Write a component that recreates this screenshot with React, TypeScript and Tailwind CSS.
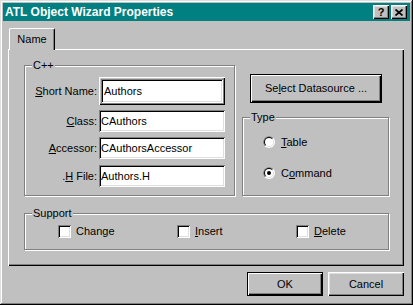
import React from 'react';

// Win95 style bevels
const raised = 'shadow-[inset_1px_1px_#fff,inset_-1px_-1px_#000,inset_-2px_-2px_#808080,inset_2px_2px_#dfdfdf]';
const defaultBtn = 'border border-black shadow-[inset_1px_1px_#fff,inset_-1px_-1px_#000,inset_-2px_-2px_#808080]';
const sunken = 'bg-white shadow-[inset_1px_1px_#808080,inset_-1px_-1px_#fff,inset_2px_2px_#000,inset_-2px_-2px_#dfdfdf]';
const etched = 'relative border border-[#808080] shadow-[inset_1px_1px_#fff,1px_1px_#fff]';

const Legend = ({ children }: { children: React.ReactNode }) => (
  <span className="absolute -top-[7px] left-[7px] bg-[#c0c0c0] px-[1px] leading-[13px]">{children}</span>
);

const Field = ({ accel, rest, value, pre = '' }: { accel: string; rest: string; value: string; pre?: string }) => (
  <div className="flex items-center h-[22px]">
    <div className="w-[72px] text-right leading-[13px]">
      {pre}
      <u>{accel}</u>
      {rest}
    </div>
    <div className={`ml-[2px] w-[126px] h-[22px] flex items-center pl-[2px] ${sunken}`}>
      <span className="leading-[13px]">{value}</span>
    </div>
  </div>
);

const Radio = ({ id, checked }: { id: string; checked?: boolean }) => (
  <svg width="12" height="12" viewBox="0 0 12 12" className="shrink-0">
    <defs>
      <clipPath id={id}>
        <polygon points="0,0 12,0 0,12" />
      </clipPath>
    </defs>
    <circle cx="6" cy="6" r="6" fill="#fff" />
    <circle cx="6" cy="6" r="6" fill="#808080" clipPath={`url(#${id})`} />
    <circle cx="6" cy="6" r="5" fill="#dfdfdf" />
    <circle cx="6" cy="6" r="5" fill="#000" clipPath={`url(#${id})`} />
    <circle cx="6" cy="6" r="4" fill="#fff" />
    {checked && <circle cx="6" cy="6" r="2" fill="#000" />}
  </svg>
);

const Check = ({ children, wide }: { children: React.ReactNode; wide?: boolean }) => (
  <div className={`h-[13px] flex items-center ${wide ? 'w-[119px] shrink-0' : ''}`}>
    <div className={`w-[13px] h-[13px] shrink-0 ${sunken}`} />
    <span className="ml-[5px] leading-[13px]">{children}</span>
  </div>
);

export default function App() {
  return (
    <div className="w-[413px] h-[305px] bg-[#c0c0c0] p-[3px] flex flex-col font-['Liberation_Sans',Arial,sans-serif] text-[11px] text-black shadow-[inset_-1px_-1px_#000,inset_1px_1px_#dfdfdf,inset_-2px_-2px_#808080,inset_2px_2px_#fff]">
      {/* title bar */}
      <div className="h-[18px] bg-[#008080] flex items-center pl-[2px] pr-[3px]">
        <span className="text-white font-bold text-[12px] leading-none">ATL Object Wizard Properties</span>
        <div className="ml-auto flex gap-[2px]">
          <div className={`w-[16px] h-[14px] bg-[#c0c0c0] flex items-center justify-center font-bold text-[11px] leading-none ${raised}`}>?</div>
          <div className={`w-[16px] h-[14px] bg-[#c0c0c0] flex items-center justify-center ${raised}`}>
            <svg width="8" height="7" viewBox="0 0 8 7">
              <path d="M0.5 0.5L7.5 6.5M7.5 0.5L0.5 6.5" stroke="#000" strokeWidth="1.7" />
            </svg>
          </div>
        </div>
      </div>

      <div className="pl-[5px] pr-[6px] pt-[7px] flex flex-col">
        {/* tab */}
        <div className="relative z-10 ml-[1px] -mb-[1px] w-[46px] h-[22px] bg-[#c0c0c0] border-l border-t border-r border-white border-r-black rounded-t-[2px] shadow-[inset_-1px_0_#808080] flex items-center justify-center">
          <span className="leading-[13px]">Name</span>
        </div>

        {/* tab page */}
        <div className="h-[217px] pl-[16px] pt-[16px] flex flex-col shadow-[inset_1px_1px_#fff,inset_-1px_-1px_#000,inset_-2px_-2px_#808080]">
          <div className="flex">
            <div className={`w-[211px] h-[131px] pt-[11px] flex flex-col ${etched}`}>
              <Legend>C++</Legend>
              <div className="flex items-center h-[28px]">
                <div className="w-[72px] text-right leading-[13px]">
                  <u>S</u>hort Name:
                </div>
                <div className="ml-[2px] w-[126px] h-[28px] p-[2px] shadow-[inset_1px_1px_#fff,inset_-1px_-1px_#000,inset_-2px_-2px_#808080]">
                  <div className={`h-full flex items-center pl-[3px] ${sunken}`}>
                    <span className="leading-[13px]">Authors</span>
                  </div>
                </div>
              </div>
              <div className="mt-[5px]">
                <Field accel="C" rest="lass:" value="CAuthors" />
              </div>
              <div className="mt-[5px]">
                <Field accel="A" rest="ccessor:" value="CAuthorsAccessor" />
              </div>
              <div className="mt-[6px]">
                <Field pre="." accel="H" rest=" File:" value="Authors.H" />
              </div>
            </div>

            <div className="ml-[7px] flex flex-col">
              <div className={`ml-[8px] mt-[9px] w-[132px] h-[29px] flex items-center justify-center ${defaultBtn}`}>
                <span className="leading-[13px]">
                  Se<u>l</u>ect Datasource ...
                </span>
              </div>
              <div className={`mt-[14px] w-[147px] h-[79px] pl-[20px] pt-[18px] flex flex-col ${etched}`}>
                <Legend>Type</Legend>
                <div className="flex items-center h-[12px]">
                  <Radio id="rb-table" />
                  <span className="ml-[6px] leading-[13px]">
                    <u>T</u>able
                  </span>
                </div>
                <div className="flex items-center h-[12px] mt-[19px]">
                  <Radio id="rb-cmd" checked />
                  <span className="ml-[6px] leading-[13px]">
                    C<u>o</u>mmand
                  </span>
                </div>
              </div>
            </div>
          </div>

          <div className={`mt-[17px] w-[365px] h-[37px] pl-[33px] pt-[11px] flex items-start ${etched}`}>
            <Legend>Support</Legend>
            <Check wide>Change</Check>
            <Check wide>
              <u>I</u>nsert
            </Check>
            <Check>
              <u>D</u>elete
            </Check>
          </div>
        </div>

        {/* dialog buttons */}
        <div className="mt-[6px] flex justify-end gap-[5px]">
          <div className={`w-[76px] h-[24px] flex items-center justify-center ${defaultBtn}`}>
            <span className="leading-[13px]">OK</span>
          </div>
          <div className={`w-[76px] h-[24px] flex items-center justify-center ${raised}`}>
            <span className="leading-[13px]">Cancel</span>
          </div>
        </div>
      </div>
    </div>
  );
}
